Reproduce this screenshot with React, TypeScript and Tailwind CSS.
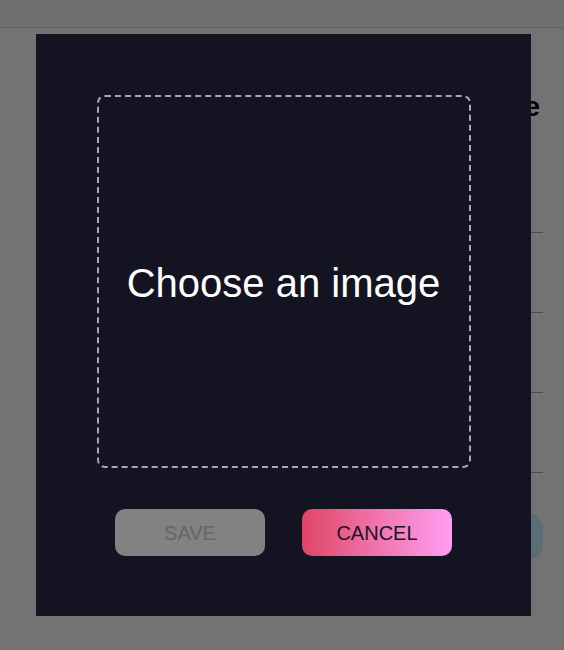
import React from "react";

const rows = ["name", "email", "phone", "location"];

function BackgroundPage() {
	return (
		<div className="min-h-screen bg-white" style={{ fontFamily: '"Liberation Sans", Arial, sans-serif' }}>
			<header className="h-[28px] border-b border-[#dcdcdc] bg-[#f8f8f8]" />
			<main className="mx-auto w-[522px] pt-[62px]">
				<div className="flex justify-end pr-[3px]">
					<h1 className="text-[28px] font-bold leading-[34px] text-black">Edit profile</h1>
				</div>
				<div className="mt-[29px] flex flex-col pl-[240px]">
					{rows.map((r) => (
						<div key={r} className="h-[80px] border-b border-[#a6a6a6]" />
					))}
				</div>
				<div className="mt-[40px] flex justify-end">
					<button className="h-[47px] w-[150px] rounded-[15px] bg-[#c8f1fd] text-[#222]">
						Update
					</button>
				</div>
			</main>
		</div>
	);
}

export default function App() {
	return (
		<div className="relative">
			<BackgroundPage />
			<div
				className="fixed inset-0 flex items-center justify-center bg-[rgba(0,0,0,0.55)] pl-[3px]"
				style={{ fontFamily: '"Liberation Sans", Arial, sans-serif' }}
			>
				<div className="flex w-[495px] flex-col items-center bg-[#141322] px-[60px] pb-[60px] pt-[61px]">
					<div className="flex h-[373px] w-[374px] items-center justify-center rounded-lg border-2 border-dashed border-[#a8a8ad] pt-[3px]">
						<span className="text-[40px] leading-none text-white">Choose an image</span>
					</div>
					<div className="mt-[41px] flex gap-[37px]">
						<button className="h-[47px] w-[150px] rounded-[10px] bg-[#828282] text-[20px] text-[#666666]">
							SAVE
						</button>
						<button className="h-[47px] w-[150px] rounded-[10px] bg-gradient-to-r from-[#df4467] to-[#ff9df2] text-[20px] text-[#171427]">
							CANCEL
						</button>
					</div>
				</div>
			</div>
		</div>
	);
}
